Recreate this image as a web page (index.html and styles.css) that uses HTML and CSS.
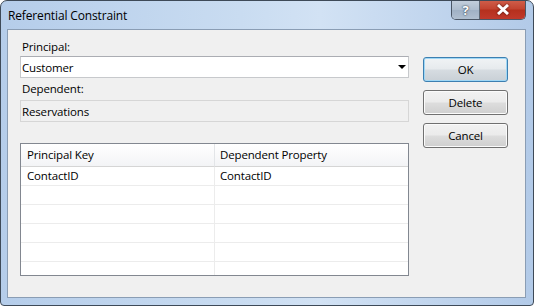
FILE: index.html
```html
<!DOCTYPE html>
<html lang="en">

<head>
    <meta charset="UTF-8">
    <title>Referential Constraint</title>
    <link rel="stylesheet" href="styles.css">
</head>

<body>

    <div class="window">
        <div class="titlebar">
            <span class="title">Referential Constraint</span>
            <div class="caption-buttons">
                <div class="cap-btn help">?</div>
                <div class="cap-btn close">
                    <svg width="14" height="11" viewBox="0 0 14 11">
                        <path d="M2 1 L12 10 M12 1 L2 10" stroke="#fff" stroke-width="3" />
                    </svg>
                </div>
            </div>
        </div>

        <div class="client">
            <div class="fields">
                <div class="label">Principal:</div>
                <div class="combo">
                    <span>Customer</span>
                    <span class="arrow"></span>
                </div>
                <div class="label second">Dependent:</div>
                <div class="readonly">Reservations</div>

                <div class="grid">
                    <div class="grid-head">Principal Key</div>
                    <div class="grid-head">Dependent Property</div>
                    <div class="cell">ContactID</div>
                    <div class="cell">ContactID</div>
                    <div class="cell"></div>
                    <div class="cell"></div>
                    <div class="cell"></div>
                    <div class="cell"></div>
                    <div class="cell"></div>
                    <div class="cell"></div>
                    <div class="cell"></div>
                    <div class="cell"></div>
                    <div class="cell"></div>
                    <div class="cell"></div>
                </div>
            </div>

            <div class="buttons">
                <button class="default">OK</button>
                <button>Delete</button>
                <button>Cancel</button>
            </div>
        </div>
    </div>

</body>

</html>
```

FILE: styles.css
```css
body {
    margin: 0;
    font-family: "Open Sans", "Noto Sans", sans-serif;
    font-size: 11.5px;
    letter-spacing: -0.15px;
    color: #000;
    background: #fff;
}

.window {
    width: 534px;
    height: 306px;
    box-sizing: border-box;
    border: 1px solid #3e4a58;
    border-radius: 7px 7px 4px 4px;
    background: linear-gradient(to right, #b5cdea, #c9dcf1 45%, #d2e2f4 60%, #b2cae8);
    padding: 0 7px 7px 6px;
    display: flex;
    flex-direction: column;
    overflow: hidden;
}

.titlebar {
    height: 28px;
    display: flex;
    justify-content: space-between;
    align-items: flex-start;
}

.title {
    padding: 6px 0 0 1px;
    font-size: 12px;
}

.caption-buttons {
    display: flex;
    margin-top: -1px;
    border: 1px solid #4a5665;
    border-top: none;
    border-radius: 0 0 5px 5px;
    overflow: hidden;
}

.cap-btn {
    height: 19px;
    display: flex;
    align-items: center;
    justify-content: center;
}

.help {
    width: 27px;
    border-right: 1px solid #5d6875;
    background: linear-gradient(to bottom, #c4d0dd, #aebdce 50%, #9fb0c4 51%, #b0bfd0);
    color: #fff;
    font-weight: bold;
    font-size: 13px;
    text-shadow: 0 0 2px #33404f, 0 0 1px #33404f;
}

.close {
    width: 45px;
    background: linear-gradient(to bottom, #d0604c, #c24330 48%, #b5301d 52%, #c0392b);
}

.close svg {
    filter: drop-shadow(0 0 1px #4a0e05);
}

.client {
    flex: 1;
    border: 1px solid #8a9db4;
    background: #f0f0f0;
    display: flex;
    padding: 9px 17px 0 12px;
    gap: 14px;
}

.fields {
    width: 389px;
}

.label {
    line-height: 16px;
    padding-left: 2px;
    margin-bottom: 1px;
}

.label.second {
    margin-top: 3px;
    margin-bottom: 3px;
}

.combo,
.readonly {
    height: 20px;
    border: 1px solid #c7c9cc;
    border-top-color: #abadb3;
    padding-left: 1px;
    display: flex;
    align-items: center;
    justify-content: space-between;
}

.combo {
    background: #fff;
}

.readonly {
    background: #f0f0f0;
    border-color: #d6d6d6;
}

.arrow {
    width: 0;
    height: 0;
    border-left: 4px solid transparent;
    border-right: 4px solid transparent;
    border-top: 4px solid #000;
    margin-right: 2px;
}

.grid {
    margin-top: 21px;
    height: 131px;
    border: 1px solid #828790;
    background: #fff;
    display: grid;
    grid-template-columns: 194px 1fr;
    grid-auto-rows: 19px;
    grid-template-rows: 23px;
    overflow: hidden;
}

.grid-head {
    background: linear-gradient(to bottom, #ffffff, #f3f4f6);
    border-bottom: 1px solid #d5d5d5;
    border-right: 1px solid #e3e5e8;
    padding-left: 6px;
    line-height: 22px;
}

.cell {
    border-bottom: 1px solid #ececec;
    border-right: 1px solid #ececec;
    padding-left: 6px;
    line-height: 18px;
}

.grid-head:nth-child(2n),
.cell:nth-child(2n) {
    border-right: none;
    padding-left: 5px;
}

.buttons {
    padding-top: 18px;
    display: flex;
    flex-direction: column;
    gap: 8px;
}

button {
    width: 85px;
    height: 25px;
    font-family: inherit;
    font-size: 11.5px;
    letter-spacing: -0.15px;
    color: #000;
    border: 1px solid #707070;
    border-radius: 3px;
    background: linear-gradient(to bottom, #f2f2f2, #ebebeb 48%, #dddddd 52%, #cfcfcf);
    box-shadow: inset 0 0 0 1px #fbfbfb;
    padding: 0;
}

button.default {
    border-color: #3c7fb1;
    box-shadow: inset 0 0 0 1px #9fd7f5;
    background: linear-gradient(to bottom, #f0f3f5, #e6eaed 48%, #d6dce1 52%, #c9d0d6);
}
```
